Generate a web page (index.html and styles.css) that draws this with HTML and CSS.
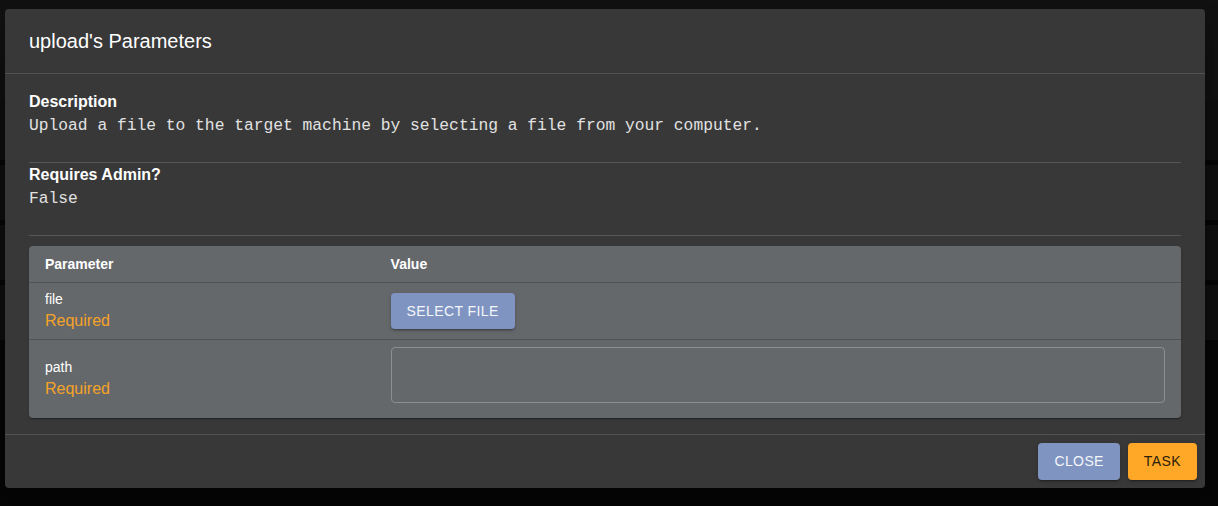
FILE: index.html
```html
<!DOCTYPE html>
<html>
<head>
<meta charset="utf-8">
<link rel="stylesheet" href="styles.css">
</head>
<body>
<div class="backdrop">
  <div class="bg-top"></div>
  <div class="bg-row"></div>
  <div class="bg-row"></div>
  <div class="bg-row"></div>
  <div class="bg-row"></div>
</div>
<div class="dialog">
  <div class="dialog-title">upload's Parameters</div>
  <div class="dialog-content">
    <div class="section">
      <div class="section-head">Description</div>
      <div class="mono">Upload a file to the target machine by selecting a file from your computer.</div>
    </div>
    <hr class="rule">
    <div class="section">
      <div class="section-head">Requires Admin?</div>
      <div class="mono">False</div>
    </div>
    <hr class="rule">
    <div class="table-paper">
      <table class="params">
        <colgroup><col class="col-name"><col class="col-value"></colgroup>
        <thead>
          <tr><th>Parameter</th><th>Value</th></tr>
        </thead>
        <tbody>
          <tr>
            <td><div class="pname">file</div><div class="req">Required</div></td>
            <td><button class="btn btn-blue">Select File</button></td>
          </tr>
          <tr class="last">
            <td><div class="pname">path</div><div class="req">Required</div></td>
            <td><div class="textfield"></div></td>
          </tr>
        </tbody>
      </table>
    </div>
  </div>
  <div class="dialog-actions">
    <button class="btn btn-blue">Close</button>
    <button class="btn btn-orange">Task</button>
  </div>
</div>
</body>
</html>
```
FILE: styles.css
```css
* { box-sizing: border-box; }
html, body { margin: 0; padding: 0; }
body {
  width: 1218px;
  height: 506px;
  overflow: hidden;
  background: #070707;
  font-family: "Liberation Sans", Arial, sans-serif;
  position: relative;
}
.backdrop { display: flex; flex-direction: column; }
.bg-top { height: 100px; background: #121212; }
.bg-row { height: 55px; margin-bottom: 5px; background: #0f0f0f; border-top: 0; }
.bg-row:nth-child(2) { height: 60px; }
.dialog {
  position: absolute;
  left: 5px;
  top: 9px;
  width: 1200px;
  height: 479px;
  background: #383838;
  border-radius: 4px;
  box-shadow: 0 11px 15px -7px rgba(0,0,0,0.2), 0 24px 38px 3px rgba(0,0,0,0.14), 0 9px 46px 8px rgba(0,0,0,0.12);
  display: flex;
  flex-direction: column;
  color: #fff;
}
.dialog-title {
  padding: 16px 24px;
  font-size: 20px;
  line-height: 32px;
  font-weight: 400;
}
.dialog-content {
  border-top: 1px solid #525252;
  border-bottom: 1px solid #525252;
  padding: 16px 24px;
}
.section-head {
  font-weight: 700;
  font-size: 16px;
  line-height: 24px;
}
.mono {
  font-family: "Liberation Mono", "Courier New", monospace;
  font-size: 16.3px;
  line-height: 24px;
  color: #e2e2e2;
  padding-bottom: 24px;
}
.rule {
  border: 0;
  border-top: 1px solid #575757;
  margin: 0;
  height: 0;
}
.rule + .table-paper { margin-top: 10px; }
.table-paper {
  background: #65686b;
  border-radius: 4px;
  box-shadow: 0 2px 1px -1px rgba(0,0,0,0.2), 0 1px 1px 0 rgba(0,0,0,0.14), 0 1px 3px 0 rgba(0,0,0,0.12);
  overflow: hidden;
}
.params {
  width: 100%;
  border-collapse: collapse;
  table-layout: fixed;
}
.col-name { width: 30%; }
.params th {
  text-align: left;
  font-size: 14px;
  font-weight: 700;
  line-height: 24px;
  padding: 6px 16px;
  border-bottom: 1px solid #505356;
}
.params td {
  padding: 6px 16px;
  vertical-align: middle;
  border-bottom: 1px solid #505356;
}
.params tr.last td { border-bottom: 0; }
.pname {
  font-size: 14px;
  line-height: 20px;
  color: #fff;
}
.req {
  font-size: 16px;
  line-height: 24px;
  color: #f5a327;
}
.btn {
  font-family: "Liberation Sans", Arial, sans-serif;
  font-size: 14px;
  line-height: 24.5px;
  letter-spacing: 0.4px;
  text-transform: uppercase;
  border: 0;
  border-radius: 4px;
  padding: 6px 16px;
  min-width: 64px;
  box-shadow: 0 3px 1px -2px rgba(0,0,0,0.2), 0 2px 2px 0 rgba(0,0,0,0.14), 0 1px 5px 0 rgba(0,0,0,0.12);
  cursor: pointer;
}
.btn-blue { background: #7f94c1; color: #f4f6fa; }
.btn-orange { background: #ffa726; color: #2b1e0a; }
.textfield {
  height: 56px;
  margin: 1px 0 9px;
  border: 1px solid #8c8f92;
  border-radius: 4px;
}
.dialog-actions {
  flex: 1;
  display: flex;
  justify-content: flex-end;
  align-items: center;
  gap: 8px;
  padding: 8px;
}
```
